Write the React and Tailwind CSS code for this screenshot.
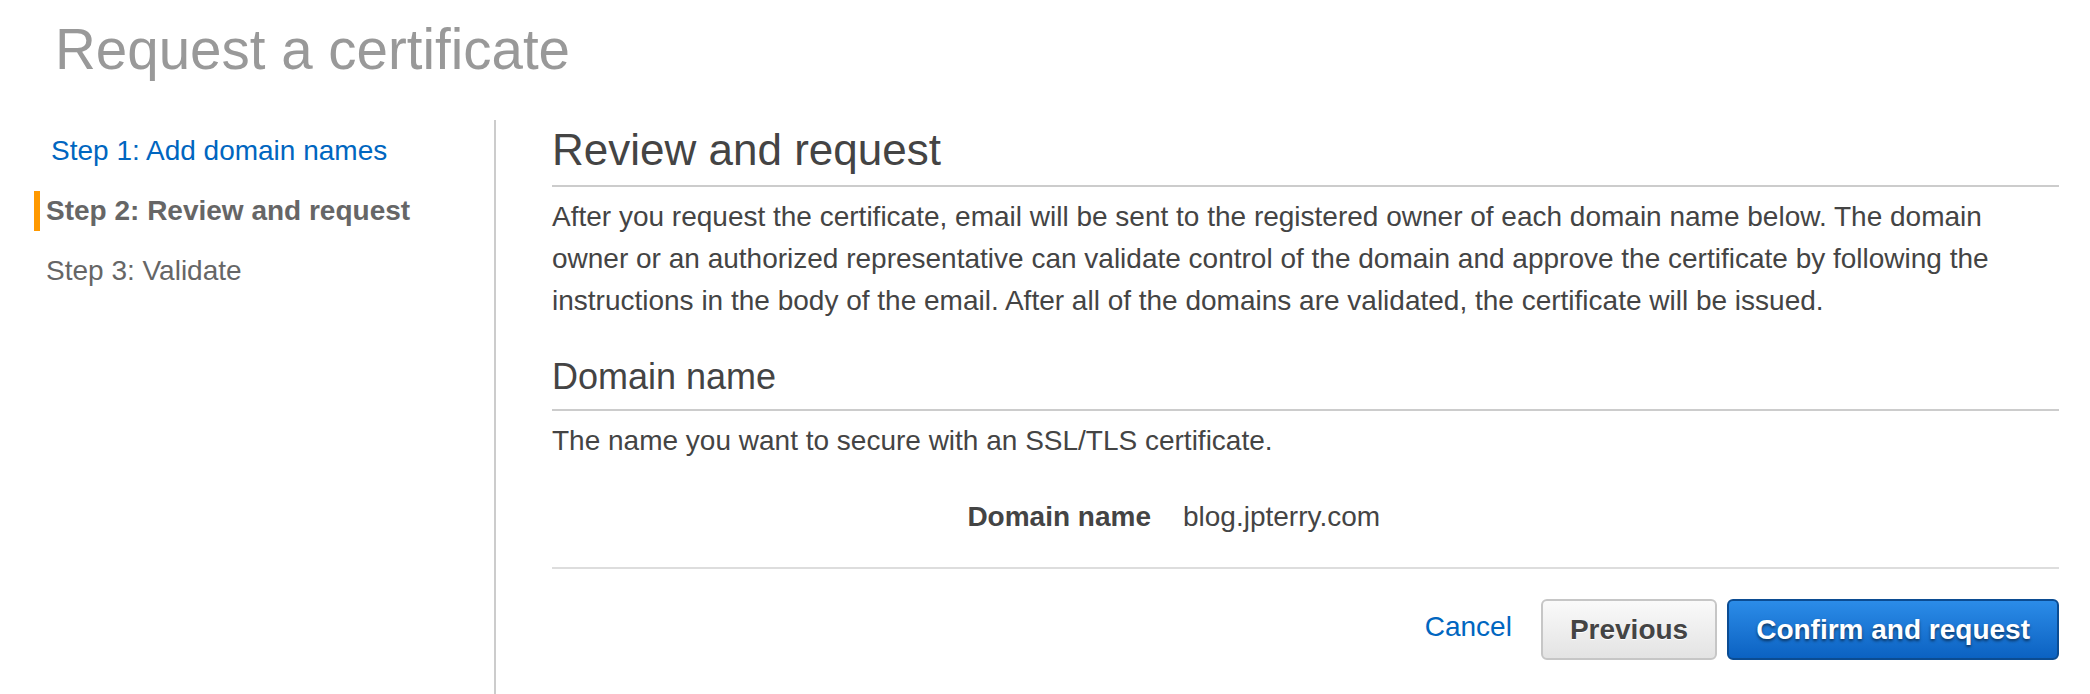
import React from "react";

const font = { fontFamily: '"Liberation Sans", Arial, Helvetica, sans-serif' };

export default function App() {
  return (
    <div
      className="w-[2090px] h-[694px] bg-white flex flex-col overflow-hidden"
      style={font}
    >
      <h1 className="pl-[55px] pt-[18px] pb-[38px] text-[56.5px] leading-[64px] text-[#999999] font-normal">
        Request a certificate
      </h1>
      <div className="flex flex-1 min-h-0">
        <nav className="w-[496px] shrink-0 border-r-2 border-[#cccccc] pt-[11px]">
          <ul className="pl-[34px] flex flex-col gap-[20px] text-[28px] leading-[40px]">
            <li className="border-l-[6px] border-transparent pl-[6px]">
              <a className="ml-[5px] text-[#0066c0]" href="#">
                Step 1: Add domain names
              </a>
            </li>
            <li className="border-l-[6px] border-[#ff9900] pl-[6px] font-bold text-[#666666]">
              Step 2: Review and request
            </li>
            <li className="border-l-[6px] border-transparent pl-[6px] text-[#666666]">
              Step 3: Validate
            </li>
          </ul>
        </nav>
        <main className="flex-1 pl-[56px] pr-[31px] pt-[4px] text-[#444444]">
          <h2 className="text-[44px] leading-[52px] pb-[9px] border-b-2 border-[#cccccc] font-normal">
            Review and request
          </h2>
          <p className="mt-[9px] text-[28px] leading-[42px]">
            After you request the certificate, email will be sent to the registered owner of each domain name below. The domain owner or an authorized representative can validate control of the domain and approve the certificate by following the instructions in the body of the email. After all of the domains are validated, the certificate will be issued.
          </p>
          <h3 className="mt-[33px] text-[36px] leading-[44px] pb-[10px] border-b-2 border-[#cccccc] font-normal">
            Domain name
          </h3>
          <p className="mt-[9px] text-[28px] leading-[42px]">
            The name you want to secure with an SSL/TLS certificate.
          </p>
          <div className="mt-[34px] flex text-[28px] leading-[42px] pb-[29px] border-b-2 border-[#dddddd]">
            <div className="w-[599px] text-right font-bold">Domain name</div>
            <div className="ml-[32px]">blog.jpterry.com</div>
          </div>
          <div className="mt-[30px] flex items-center justify-end">
            <a href="#" className="text-[28px] leading-[31px] text-[#0066c0] mr-[29px] mb-[6px]">
              Cancel
            </a>
            <button className="h-[61px] px-[27px] rounded-[6px] border-2 border-[#c6c6c6] bg-gradient-to-b from-[#fafafa] to-[#e3e3e3] text-[28px] font-bold text-[#444444] [text-shadow:0_1px_0_#ffffff] mr-[10px]">
              Previous
            </button>
            <button className="h-[61px] px-[27px] rounded-[6px] border-2 border-[#0b4c92] bg-gradient-to-b from-[#2b8ce8] to-[#0b62c2] text-[28px] font-bold text-white [text-shadow:0_2px_3px_rgba(0,0,0,0.55)]">
              Confirm and request
            </button>
          </div>
        </main>
      </div>
    </div>
  );
}
